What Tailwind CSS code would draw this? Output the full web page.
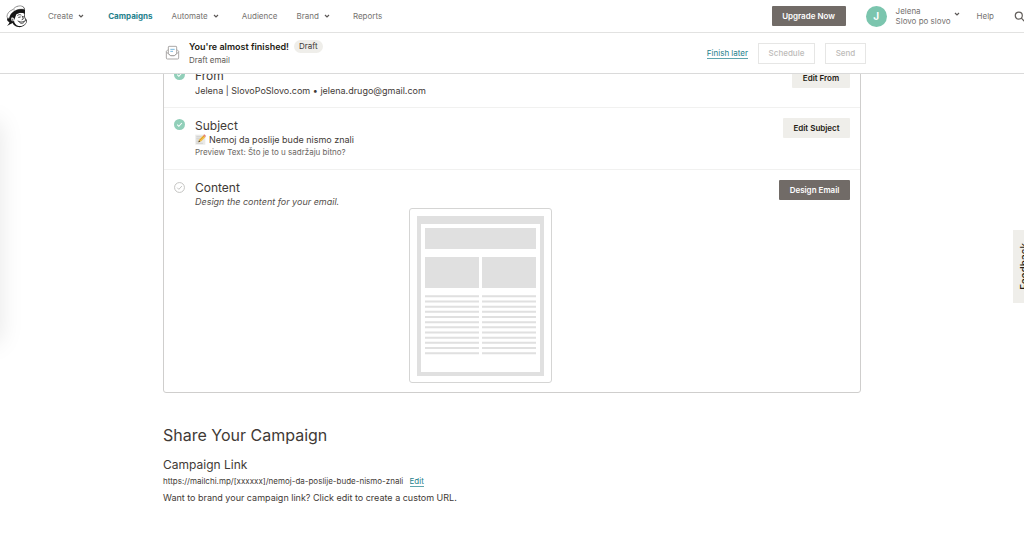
<!DOCTYPE html>
<html lang="en">
<head>
<meta charset="utf-8">
<meta name="viewport" content="width=device-width, initial-scale=1">
<title>You're almost finished!</title>
<script src="https://cdn.jsdelivr.net/npm/@tailwindcss/browser@4"></script>
</head>
<body class="relative h-screen overflow-hidden bg-white font-['Inter','Liberation_Sans',sans-serif] text-[9px] leading-3 text-[#3f3a36]">

<header class="relative z-10 flex h-[33px] items-center border-b border-[#e2e2e1] bg-white pl-[6px] text-[8px] text-[#75726f]">
  <a href="#" aria-label="Home" class="mr-5 shrink-0">
    <svg class="h-[23px] w-[22px]" viewBox="0 0 66 69">
      <path d="M22 16C27 7 35 2 44 3c9 0 13 6 13 13l-1 12 2 12c5 4 6 9 3 14-5 9-15 14-25 12-8-1-14-6-16-12-6 3-12 6-17 9 5-5 7-8 7-12-6-1-8-6-6-12z" fill="#161616"/>
      <path d="M30 29c7-5 17-7 24-4l1 10 2 8c5 3 5 9 1 13-5 6-13 8-20 7-9-2-14-9-14-17l3-7z" fill="#fff"/>
      <path d="M20 14C9 18 3 26 3 35c0 5 5 6 8 3 2-9 7-15 14-19 9-6 20-8 31-5C54 5 47 1 38 3c-7 1-13 5-18 11z" fill="#fff" stroke="#666" stroke-width="2"/>
      <path d="M21 22C29 14 42 10 56 14l1 12c-11-4-19-3-27 2l-5 12-9-4-6 3c2-7 5-12 11-17z" fill="#161616"/>
      <path d="M15 42c0-5 7-6 9-1l-1 7c-4 2-8-1-8-6z" fill="#fff"/>
      <path d="M17 42c3-1 4 1 3 4M35 31c4-3 7-3 10-1M38 37l5-1M51 35l3 1M49 34l3 8-4 2M36 48c8 5 15 4 23-2M39 50c4 7 12 7 17 0" fill="none" stroke="#222" stroke-width="2.4" stroke-linecap="round"/>
      <path d="M20 14c6 0 8 2 9 4" stroke="#888" stroke-width="2" fill="none"/>
    </svg>
  </a>
  <nav class="flex items-center gap-[22px]" aria-label="Main">
    <button class="mr-[1px] flex items-center gap-1">Create
      <svg class="size-2" viewBox="0 0 8 8" fill="none" stroke="#5c5856" stroke-width="1.2"><path d="M2 3l2 2 2-2"/></svg>
    </button>
    <a href="#" class="font-bold text-[#24818c]">Campaigns</a>
    <button class="ml-[-3px] flex items-center gap-1">Automate
      <svg class="size-2" viewBox="0 0 8 8" fill="none" stroke="#5c5856" stroke-width="1.2"><path d="M2 3l2 2 2-2"/></svg>
    </button>
    <a href="#">Audience</a>
    <button class="ml-[-3px] flex items-center gap-1">Brand
      <svg class="size-2" viewBox="0 0 8 8" fill="none" stroke="#5c5856" stroke-width="1.2"><path d="M2 3l2 2 2-2"/></svg>
    </button>
    <a href="#">Reports</a>
  </nav>
  <div class="ml-auto flex shrink-0 items-center">
    <button class="mr-5 h-5 w-[74px] rounded-[1px] bg-[#716b67] font-semibold text-white">Upgrade Now</button>
    <button class="mr-4 flex items-center text-left">
      <span class="mr-[9px] flex size-[21px] items-center justify-center rounded-full bg-[#7bc5ae] text-[10px] font-bold text-white">J</span>
      <span class="leading-[10px]">Jelena<br>Slovo po slovo</span>
      <svg class="mb-1 ml-[2px] size-2" viewBox="0 0 8 8" fill="none" stroke="#5c5856" stroke-width="1.2"><path d="M2 3l2 2 2-2"/></svg>
    </button>
    <a href="#" class="mr-5">Help</a>
    <button aria-label="Search" class="mr-[-1px]">
      <svg class="size-[11px]" viewBox="0 0 11 11" fill="none" stroke="#625e5b" stroke-width="1.2"><circle cx="4.8" cy="4.6" r="3.5"/><path d="M7.3 7.1L10.6 10.4"/></svg>
    </button>
  </div>
</header>

<div class="relative z-10 h-[41px] border-b border-[#dadada] bg-white">
  <div class="mx-auto flex h-full w-full max-w-[708px] items-center pl-[7px]">
    <svg class="mr-[9px] h-4 w-[15px] shrink-0" viewBox="0 0 45 48" fill="none" stroke="#a5a3a1" stroke-width="2.8" stroke-linejoin="round">
      <path d="M10 13L4 19v20q0 3 3 3h31q3 0 3-3V19l-6-6"/>
      <path d="M10 26V6q0-2 2-2h21q2 0 2 2v20l-7 6H17z"/>
      <path d="M4 21l13 11h11l13-11"/>
      <path d="M16 13h13M16 19h8" stroke="#6fb3dc"/>
    </svg>
    <div>
      <div class="flex items-center gap-[5px]">
        <h1 class="font-semibold text-[#241c15]">You're almost finished!</h1>
        <span class="rounded-full bg-[#efeeea] px-[5px] text-[8px] leading-[13px]">Draft</span>
      </div>
      <p class="mt-px text-[8px] text-[#5e5955]">Draft email</p>
    </div>
    <div class="ml-auto flex items-center gap-[10px] text-[8px]">
      <a href="#" class="mt-px border-b border-[#5fa5ad] leading-[9px] text-[#24818c]">Finish later</a>
      <button disabled class="h-[21px] w-[57px] border border-[#e6e6e5] font-medium text-[#bdbbb9]">Schedule</button>
      <button disabled class="h-[21px] w-[41px] border border-[#e6e6e5] font-medium text-[#bdbbb9]">Send</button>
    </div>
  </div>
</div>

<main class="mx-auto w-full max-w-[698px]">
  <div class="-mt-[18px] rounded-[3px] border border-[#cfcecd]">
    <section class="flex items-start border-b border-[#f1f1f0] p-[10px]">
      <svg class="mr-[10px] mt-[2px] size-[11px] shrink-0" viewBox="0 0 12 12"><circle cx="6" cy="6" r="6" fill="#91cfb9"/><path d="M3.5 6.2l1.8 1.8 3.3-3.6" fill="none" stroke="#fff" stroke-width="1.1"/></svg>
      <div class="min-w-0 flex-1">
        <h2 class="text-[12px] leading-[17px]">From</h2>
        <p class="leading-[13px]">Jelena | SlovoPoSlovo.com • jelena.drugo@gmail.com</p>
      </div>
      <button class="mt-px h-5 w-[58px] rounded-[1px] bg-[#efeeea] text-[8px] font-semibold text-[#241c15]">Edit From</button>
    </section>
    <section class="flex items-start border-b border-[#f1f1f0] p-[10px]">
      <svg class="mr-[10px] mt-px size-[11px] shrink-0" viewBox="0 0 12 12"><circle cx="6" cy="6" r="6" fill="#91cfb9"/><path d="M3.5 6.2l1.8 1.8 3.3-3.6" fill="none" stroke="#fff" stroke-width="1.1"/></svg>
      <div class="min-w-0 flex-1">
        <h2 class="text-[12px] leading-[15px]">Subject</h2>
        <p class="flex items-center gap-[3px] leading-[13px]">
          <svg class="size-[11px]" viewBox="0 0 33 33"><path d="M1 2h30v30H1z" fill="#e9e9e7"/><path d="M4 8h16M4 13h12M4 18h9M4 23h8M4 28h20" stroke="#bbb" stroke-width="1.5"/><path d="M10 25l3-9L25 4l6 6-12 12z" fill="#f2bf45"/><path d="M15 18L27 6" stroke="#d18d26" stroke-width="2"/><path d="M25 4l3-3 5 5-3 4z" fill="#e67b77"/><path d="M10 25l2-6 4 4z" fill="#574736"/></svg>
          Nemoj da poslije bude nismo znali
        </p>
        <p class="text-[8px] leading-[13px] text-[#6a6662]">Preview Text: Što je to u sadržaju bitno?</p>
      </div>
      <button class="h-5 w-[67px] rounded-[1px] bg-[#efeeea] text-[8px] font-semibold text-[#241c15]">Edit Subject</button>
    </section>
    <section class="flex items-start px-[10px] pb-[9px] pt-[10px]">
      <svg class="mr-[10px] mt-[2px] size-[11px] shrink-0" viewBox="0 0 12 12" fill="none" stroke="#c0bfbd"><circle cx="6" cy="6" r="5.4"/><path d="M3.5 6.2l1.8 1.8 3.3-3.6"/></svg>
      <div class="min-w-0 flex-1">
        <h2 class="text-[12px] leading-4">Content</h2>
        <p class="italic text-[#55504c]">Design the content for your email.</p>
        <div class="mx-auto w-[143px] rounded-[3px] border border-[#d5d5d4] px-[7px] pb-[6px] pt-[7px]">
          <svg class="block h-[160px] w-full" viewBox="0 0 127 160" fill="#e0e0e0" aria-label="Email layout">
            <path d="M0 0h127v160H0zM4 8v148h119V8z" fill-rule="evenodd"/>
            <path d="M8 12h111v21H8zM8 41h54v31H8zM65 41h54v31H65z"/>
            <path d="M8 80.3h54m3 0h54M8 85.5h54m3 0h54M8 90.7h54m3 0h54M8 95.8h54m3 0h54M8 101h54m3 0h54M8 106.2h54m3 0h54M8 111.3h54m3 0h54M8 116.5h54m3 0h54M8 121.7h54m3 0h54M8 126.8h54m3 0h54M8 132h54m3 0h54M8 137.2h54m3 0h54" stroke="#e0e0e0" stroke-width="2"/>
          </svg>
        </div>
      </div>
      <div class="flex w-[84px] justify-end">
        <button class="h-5 w-[71px] rounded-[1px] bg-[#716b67] text-[8px] font-semibold text-white">Design Email</button>
      </div>
    </section>
  </div>

  <section class="mt-8">
    <h2 class="text-[16px] leading-5">Share Your Campaign</h2>
    <h3 class="mt-3 text-[12px] leading-4">Campaign Link</h3>
    <p class="mt-[2px] text-[8px]">https://mailchi.mp/[xxxxxx]/nemoj-da-poslije-bude-nismo-znali
      <a href="#" class="ml-1 inline-block border-b border-[#5fa5ad] leading-[9px] text-[#24818c]">Edit</a></p>
    <p class="mt-[5px]">Want to brand your campaign link? Click edit to create a custom URL.</p>
  </section>
</main>

<!-- Collapsed panel past the left edge; only its shadow reaches the page -->
<div class="absolute right-full top-[122px] h-[220px] w-10 shadow-[0_0_24px_rgba(0,0,0,0.1)]"></div>

<button class="absolute right-[-7px] top-[230px] flex h-[73px] w-[18px] items-center justify-center bg-[#efeeea] pl-1 text-[10px] font-medium text-[#241c15]">
  <span class="rotate-180 [writing-mode:vertical-rl]">Feedback</span>
</button>
</body>
</html>
